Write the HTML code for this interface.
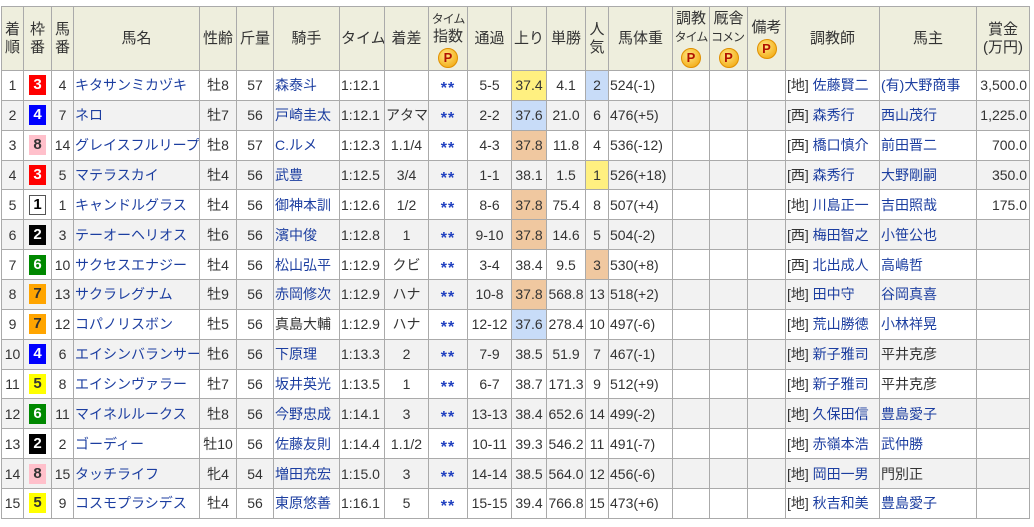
<!DOCTYPE html>
<html><head><meta charset="utf-8"><style>
body{margin:0;background:#fff;font-family:"Liberation Sans","Noto Sans CJK JP",sans-serif;font-size:14px;color:#333}
table{position:absolute;left:1px;top:6px;border-collapse:collapse;table-layout:fixed;width:1029px}
td,th{border:1px solid #aaa;padding:0 1px;white-space:nowrap;overflow:hidden;height:28.87px;text-align:center}
th{background:#eeeedd;font-weight:normal;height:63px;line-height:18px;font-size:15px}
tr:nth-child(odd) td{background:#f2f2f2}
a{color:#1c3ea0;text-decoration:none}
.l{text-align:left}.r{text-align:right;padding-right:2px}
.w{display:inline-block;width:17px;height:20px;line-height:20px;font-weight:bold;font-size:15px;vertical-align:middle}
.f1{background:#fff;outline:1px solid #555;width:15px;height:18px;line-height:18px;color:#000}
.f2{background:#000;color:#fff}.f3{background:#f00;color:#fff}.f4{background:#00f;color:#fff}
.f5{background:#ff0;color:#333}.f6{background:#080;color:#fff}.f7{background:#ffa500;color:#333}.f8{background:#ffc0cb;color:#333}
.st span{color:#2040c0;font-weight:bold;font-size:16px;letter-spacing:1px;position:relative;top:4px}
td.y{background:#fff080!important}td.b{background:#c8dcf8!important}td.o{background:#f0c8a0!important}
.p{display:inline-block;width:18px;height:18px;border-radius:50%;background:radial-gradient(circle at 40% 35%,#ffe680,#f0a000);color:#b01000;font-weight:bold;font-size:13px;line-height:18px;margin-top:2px;border:1px solid #e09000}
.sm{font-size:12px;letter-spacing:-1px}
</style></head><body>
<table>
<colgroup><col style="width:22px"><col style="width:28px"><col style="width:22px"><col style="width:126px"><col style="width:37px"><col style="width:37px"><col style="width:66px"><col style="width:45px"><col style="width:44px"><col style="width:39px"><col style="width:44px"><col style="width:35px"><col style="width:39px"><col style="width:23px"><col style="width:64px"><col style="width:37px"><col style="width:38px"><col style="width:38px"><col style="width:94px"><col style="width:97px"><col style="width:53px"></colgroup>
<tr><th>着<br>順</th><th>枠<br>番</th><th>馬<br>番</th><th>馬名</th><th>性齢</th><th>斤量</th><th>騎手</th><th>タイム</th><th>着差</th><th><span class="sm">タイム</span><br>指数<br><span class="p">P</span></th><th>通過</th><th>上り</th><th>単勝</th><th>人<br>気</th><th>馬体重</th><th>調教<br><span class="sm">タイム</span><br><span class="p">P</span></th><th>厩舎<br><span class="sm">コメント</span><br><span class="p">P</span></th><th>備考<br><span class="p">P</span></th><th>調教師</th><th>馬主</th><th>賞金<br>(万円)</th></tr>
<tr><td>1</td><td><span class="w f3">3</span></td><td>4</td><td class="l"><a>キタサンミカヅキ</a></td><td>牡8</td><td>57</td><td class="l"><a>森泰斗</a></td><td class="l">1:12.1</td><td></td><td class="st"><span>**</span></td><td>5-5</td><td class="y">37.4</td><td>4.1</td><td class="b">2</td><td class="l">524(-1)</td><td></td><td></td><td></td><td class="l">[地] <a>佐藤賢二</a></td><td class="l"><a>(有)大野商事</a></td><td class="r">3,500.0</td></tr>
<tr><td>2</td><td><span class="w f4">4</span></td><td>7</td><td class="l"><a>ネロ</a></td><td>牡7</td><td>56</td><td class="l"><a>戸崎圭太</a></td><td class="l">1:12.1</td><td>アタマ</td><td class="st"><span>**</span></td><td>2-2</td><td class="b">37.6</td><td>21.0</td><td>6</td><td class="l">476(+5)</td><td></td><td></td><td></td><td class="l">[西] <a>森秀行</a></td><td class="l"><a>西山茂行</a></td><td class="r">1,225.0</td></tr>
<tr><td>3</td><td><span class="w f8">8</span></td><td>14</td><td class="l"><a>グレイスフルリープ</a></td><td>牡8</td><td>57</td><td class="l"><a>C.ルメ</a></td><td class="l">1:12.3</td><td>1.1/4</td><td class="st"><span>**</span></td><td>4-3</td><td class="o">37.8</td><td>11.8</td><td>4</td><td class="l">536(-12)</td><td></td><td></td><td></td><td class="l">[西] <a>橋口慎介</a></td><td class="l"><a>前田晋二</a></td><td class="r">700.0</td></tr>
<tr><td>4</td><td><span class="w f3">3</span></td><td>5</td><td class="l"><a>マテラスカイ</a></td><td>牡4</td><td>56</td><td class="l"><a>武豊</a></td><td class="l">1:12.5</td><td>3/4</td><td class="st"><span>**</span></td><td>1-1</td><td>38.1</td><td>1.5</td><td class="y">1</td><td class="l">526(+18)</td><td></td><td></td><td></td><td class="l">[西] <a>森秀行</a></td><td class="l"><a>大野剛嗣</a></td><td class="r">350.0</td></tr>
<tr><td>5</td><td><span class="w f1">1</span></td><td>1</td><td class="l"><a>キャンドルグラス</a></td><td>牡4</td><td>56</td><td class="l"><a>御神本訓</a></td><td class="l">1:12.6</td><td>1/2</td><td class="st"><span>**</span></td><td>8-6</td><td class="o">37.8</td><td>75.4</td><td>8</td><td class="l">507(+4)</td><td></td><td></td><td></td><td class="l">[地] <a>川島正一</a></td><td class="l"><a>吉田照哉</a></td><td class="r">175.0</td></tr>
<tr><td>6</td><td><span class="w f2">2</span></td><td>3</td><td class="l"><a>テーオーヘリオス</a></td><td>牡6</td><td>56</td><td class="l"><a>濱中俊</a></td><td class="l">1:12.8</td><td>1</td><td class="st"><span>**</span></td><td>9-10</td><td class="o">37.8</td><td>14.6</td><td>5</td><td class="l">504(-2)</td><td></td><td></td><td></td><td class="l">[西] <a>梅田智之</a></td><td class="l"><a>小笹公也</a></td><td></td></tr>
<tr><td>7</td><td><span class="w f6">6</span></td><td>10</td><td class="l"><a>サクセスエナジー</a></td><td>牡4</td><td>56</td><td class="l"><a>松山弘平</a></td><td class="l">1:12.9</td><td>クビ</td><td class="st"><span>**</span></td><td>3-4</td><td>38.4</td><td>9.5</td><td class="o">3</td><td class="l">530(+8)</td><td></td><td></td><td></td><td class="l">[西] <a>北出成人</a></td><td class="l"><a>高嶋哲</a></td><td></td></tr>
<tr><td>8</td><td><span class="w f7">7</span></td><td>13</td><td class="l"><a>サクラレグナム</a></td><td>牡9</td><td>56</td><td class="l"><a>赤岡修次</a></td><td class="l">1:12.9</td><td>ハナ</td><td class="st"><span>**</span></td><td>10-8</td><td class="o">37.8</td><td>568.8</td><td>13</td><td class="l">518(+2)</td><td></td><td></td><td></td><td class="l">[地] <a>田中守</a></td><td class="l"><a>谷岡真喜</a></td><td></td></tr>
<tr><td>9</td><td><span class="w f7">7</span></td><td>12</td><td class="l"><a>コパノリスボン</a></td><td>牡5</td><td>56</td><td class="l">真島大輔</td><td class="l">1:12.9</td><td>ハナ</td><td class="st"><span>**</span></td><td>12-12</td><td class="b">37.6</td><td>278.4</td><td>10</td><td class="l">497(-6)</td><td></td><td></td><td></td><td class="l">[地] <a>荒山勝徳</a></td><td class="l"><a>小林祥晃</a></td><td></td></tr>
<tr><td>10</td><td><span class="w f4">4</span></td><td>6</td><td class="l"><a>エイシンバランサー</a></td><td>牡6</td><td>56</td><td class="l"><a>下原理</a></td><td class="l">1:13.3</td><td>2</td><td class="st"><span>**</span></td><td>7-9</td><td>38.5</td><td>51.9</td><td>7</td><td class="l">467(-1)</td><td></td><td></td><td></td><td class="l">[地] <a>新子雅司</a></td><td class="l">平井克彦</td><td></td></tr>
<tr><td>11</td><td><span class="w f5">5</span></td><td>8</td><td class="l"><a>エイシンヴァラー</a></td><td>牡7</td><td>56</td><td class="l"><a>坂井英光</a></td><td class="l">1:13.5</td><td>1</td><td class="st"><span>**</span></td><td>6-7</td><td>38.7</td><td>171.3</td><td>9</td><td class="l">512(+9)</td><td></td><td></td><td></td><td class="l">[地] <a>新子雅司</a></td><td class="l">平井克彦</td><td></td></tr>
<tr><td>12</td><td><span class="w f6">6</span></td><td>11</td><td class="l"><a>マイネルルークス</a></td><td>牡8</td><td>56</td><td class="l"><a>今野忠成</a></td><td class="l">1:14.1</td><td>3</td><td class="st"><span>**</span></td><td>13-13</td><td>38.4</td><td>652.6</td><td>14</td><td class="l">499(-2)</td><td></td><td></td><td></td><td class="l">[地] <a>久保田信</a></td><td class="l"><a>豊島愛子</a></td><td></td></tr>
<tr><td>13</td><td><span class="w f2">2</span></td><td>2</td><td class="l"><a>ゴーディー</a></td><td>牡10</td><td>56</td><td class="l"><a>佐藤友則</a></td><td class="l">1:14.4</td><td>1.1/2</td><td class="st"><span>**</span></td><td>10-11</td><td>39.3</td><td>546.2</td><td>11</td><td class="l">491(-7)</td><td></td><td></td><td></td><td class="l">[地] <a>赤嶺本浩</a></td><td class="l"><a>武仲勝</a></td><td></td></tr>
<tr><td>14</td><td><span class="w f8">8</span></td><td>15</td><td class="l"><a>タッチライフ</a></td><td>牝4</td><td>54</td><td class="l"><a>増田充宏</a></td><td class="l">1:15.0</td><td>3</td><td class="st"><span>**</span></td><td>14-14</td><td>38.5</td><td>564.0</td><td>12</td><td class="l">456(-6)</td><td></td><td></td><td></td><td class="l">[地] <a>岡田一男</a></td><td class="l">門別正</td><td></td></tr>
<tr><td>15</td><td><span class="w f5">5</span></td><td>9</td><td class="l"><a>コスモプラシデス</a></td><td>牡4</td><td>56</td><td class="l"><a>東原悠善</a></td><td class="l">1:16.1</td><td>5</td><td class="st"><span>**</span></td><td>15-15</td><td>39.4</td><td>766.8</td><td>15</td><td class="l">473(+6)</td><td></td><td></td><td></td><td class="l">[地] <a>秋吉和美</a></td><td class="l"><a>豊島愛子</a></td><td></td></tr>
</table>
</body></html>
